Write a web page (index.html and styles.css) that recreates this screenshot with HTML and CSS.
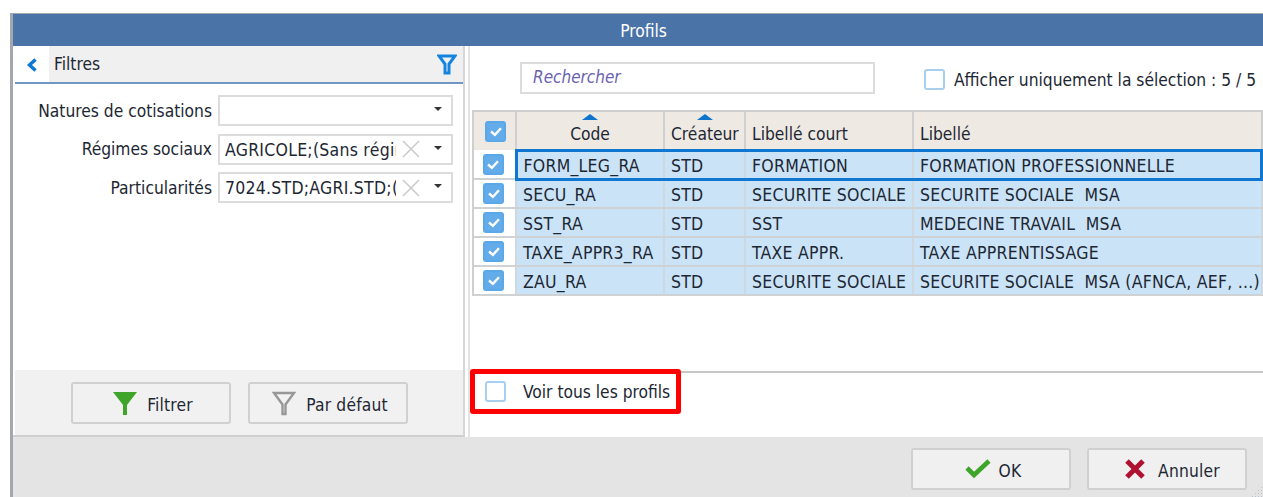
FILE: index.html
```html
<!DOCTYPE html>
<html lang="fr">
<head>
<meta charset="utf-8">
<title>Profils</title>
<link rel="stylesheet" href="styles.css">
</head>
<body>
<div class="window">
  <header class="titlebar">Profils</header>
  <div class="main">
    <aside class="filters">
      <div class="filters-head">
        <span class="collapse-tab">
          <svg width="12" height="14" viewBox="0 0 12 14"><path d="M9.5 1.5 L3.5 7 L9.5 12.5" fill="none" stroke="#0a78d7" stroke-width="3.4"/></svg>
        </span>
        <span class="filters-title">Filtres</span>
        <svg class="filters-icon" width="20" height="21" viewBox="0 0 20 21"><path d="M2 2 H18 L12 10 V19 H8 V10 Z" fill="none" stroke="#1584e0" stroke-width="3" stroke-linejoin="miter"/></svg>
      </div>
      <div class="filters-form">
        <div class="field">
          <label class="field-label">Natures de cotisations</label>
          <div class="combo"><span class="combo-text"></span><span class="combo-arrow"></span></div>
        </div>
        <div class="field">
          <label class="field-label">Régimes sociaux</label>
          <div class="combo">
            <span class="combo-text">AGRICOLE;(Sans régime)</span>
            <svg class="combo-clear" width="20" height="20" viewBox="0 0 20 20"><path d="M2 2 L18 18 M18 2 L2 18" stroke="#c9c9c9" stroke-width="1.5"/></svg>
            <span class="combo-arrow"></span>
          </div>
        </div>
        <div class="field">
          <label class="field-label">Particularités</label>
          <div class="combo">
            <span class="combo-text">7024.STD;AGRI.STD;(Sans)</span>
            <svg class="combo-clear" width="20" height="20" viewBox="0 0 20 20"><path d="M2 2 L18 18 M18 2 L2 18" stroke="#c9c9c9" stroke-width="1.5"/></svg>
            <span class="combo-arrow"></span>
          </div>
        </div>
      </div>
      <div class="filters-actions">
        <button class="btn btn-filter">
          <svg width="24" height="25" viewBox="0 0 24 25"><path d="M0 1 H24 L14 14 V24 H10 V14 Z" fill="#3fa52a"/></svg>
          <span>Filtrer</span>
        </button>
        <button class="btn btn-filter">
          <svg width="24" height="25" viewBox="0 0 24 25"><path d="M2 2 H22 L13.5 13.5 V23 H10.5 V13.5 Z" fill="none" stroke="#979797" stroke-width="2.4"/></svg>
          <span>Par défaut</span>
        </button>
      </div>
    </aside>
    <section class="profiles">
      <div class="toolbar">
        <div class="search">Rechercher</div>
        <label class="only-selection"><span class="check"></span><span>Afficher uniquement la sélection : 5 / 5</span></label>
      </div>
      <div class="grid-wrap">
        <table class="grid">
          <colgroup>
            <col class="col-check"><col class="col-code"><col class="col-creator"><col class="col-short"><col>
          </colgroup>
          <thead>
            <tr>
              <th class="cell-check"><span class="check checked head-check"><svg width="14" height="11" viewBox="0 0 12 10"><path d="M1.5 5 L5 8 L10.5 2" fill="none" stroke="#fff" stroke-width="2.2"/></svg></span></th>
              <th class="center sorted">Code</th>
              <th class="sorted">Créateur</th>
              <th>Libellé court</th>
              <th>Libellé</th>
            </tr>
          </thead>
          <tbody>
            <tr class="current">
              <td class="cell-check"><span class="check checked"><svg width="14" height="11" viewBox="0 0 12 10"><path d="M1.5 5 L5 8 L10.5 2" fill="none" stroke="#fff" stroke-width="2.2"/></svg></span></td>
              <td>FORM_LEG_RA</td><td>STD</td><td>FORMATION</td><td>FORMATION PROFESSIONNELLE</td>
            </tr>
            <tr>
              <td class="cell-check"><span class="check checked"><svg width="14" height="11" viewBox="0 0 12 10"><path d="M1.5 5 L5 8 L10.5 2" fill="none" stroke="#fff" stroke-width="2.2"/></svg></span></td>
              <td>SECU_RA</td><td>STD</td><td>SECURITE SOCIALE</td><td>SECURITE SOCIALE&nbsp; MSA</td>
            </tr>
            <tr>
              <td class="cell-check"><span class="check checked"><svg width="14" height="11" viewBox="0 0 12 10"><path d="M1.5 5 L5 8 L10.5 2" fill="none" stroke="#fff" stroke-width="2.2"/></svg></span></td>
              <td>SST_RA</td><td>STD</td><td>SST</td><td>MEDECINE TRAVAIL&nbsp; MSA</td>
            </tr>
            <tr>
              <td class="cell-check"><span class="check checked"><svg width="14" height="11" viewBox="0 0 12 10"><path d="M1.5 5 L5 8 L10.5 2" fill="none" stroke="#fff" stroke-width="2.2"/></svg></span></td>
              <td>TAXE_APPR3_RA</td><td>STD</td><td>TAXE APPR.</td><td>TAXE APPRENTISSAGE</td>
            </tr>
            <tr>
              <td class="cell-check"><span class="check checked"><svg width="14" height="11" viewBox="0 0 12 10"><path d="M1.5 5 L5 8 L10.5 2" fill="none" stroke="#fff" stroke-width="2.2"/></svg></span></td>
              <td>ZAU_RA</td><td>STD</td><td>SECURITE SOCIALE</td><td>SECURITE SOCIALE&nbsp; MSA (AFNCA, AEF, ...)</td>
            </tr>
          </tbody>
        </table>
      </div>
      <div class="all-profiles">
        <label class="all-label"><span class="check"></span><span>Voir tous les profils</span></label>
        <div class="highlight"></div>
      </div>
    </section>
  </div>
  <footer class="footer">
    <button class="btn btn-foot btn-ok">
      <svg width="28" height="22" viewBox="0 0 28 22"><path d="M3 10 L10 17 L25 3" fill="none" stroke="#3fa52a" stroke-width="4.6"/></svg>
      <span>OK</span>
    </button>
    <button class="btn btn-foot btn-cancel">
      <svg width="22" height="22" viewBox="0 0 22 22"><path d="M3 3 L19 19 M19 3 L3 19" fill="none" stroke="#ae1230" stroke-width="5"/></svg>
      <span>Annuler</span>
    </button>
    <svg class="grip" width="12" height="12" viewBox="0 0 12 12"><path d="M10 2h1v1h-1zM7 5h1v1H7zM10 5h1v1h-1zM4 8h1v1H4zM7 8h1v1H7zM10 8h1v1h-1zM1 11h1v1H1zM4 11h1v1H4zM7 11h1v1H7zM10 11h1v1h-1z" fill="#b9c3cf"/></svg>
  </footer>
</div>
</body>
</html>
```
FILE: styles.css
```css
* { box-sizing: border-box; }

html, body {
  margin: 0;
  height: 100%;
  overflow: hidden;
  background: #fff;
}

body {
  padding: 13px 0 0 10px;
  font-family: "DejaVu Sans Condensed", "DejaVu Sans", sans-serif;
  font-size: 17.25px;
  color: #1d2733;
}

.window {
  width: 1253px;
  height: 484px;
  display: flex;
  flex-direction: column;
  border-left: 3px solid #a3a8ae;
  border-top: 1px solid #a3a8ae;
}

.titlebar {
  height: 32px;
  flex: none;
  background: #4a74a8;
  color: #fff;
  text-align: center;
  line-height: 34px;
  padding-left: 11px;
}

.main {
  height: 391px;
  flex: none;
  display: flex;
}

/* Filter panel */
.filters {
  width: 452px;
  flex: none;
  display: flex;
  flex-direction: column;
  padding-left: 2px;
  border-right: 2px solid #d6d6d6;
  border-bottom: 2px solid #cfcfcf;
  margin-right: 5px;
  box-shadow: 3px 0 0 #fff, 5px 0 0 #e4e4e4;
}

.filters-head {
  height: 38px;
  flex: none;
  display: flex;
  align-items: center;
  background: #f0f0f0;
  border-bottom: 2px solid #6f97c2;
}

.collapse-tab {
  width: 34px;
  align-self: stretch;
  background: #fff;
  display: flex;
  align-items: center;
  justify-content: center;
  padding-top: 2px;
}

.filters-title {
  margin-left: 5px;
  flex: 1;
  padding-bottom: 1px;
}

.filters-icon { margin-right: 6px; }

.filters-form {
  flex: 1;
  display: flex;
  flex-direction: column;
  gap: 7.5px;
  padding: 11px 10px 0 0;
}

.field {
  display: flex;
  align-items: center;
  height: 31px;
  gap: 6px;
}

.field-label {
  width: 197px;
  text-align: right;
  white-space: nowrap;
}

.combo {
  width: 235px;
  height: 100%;
  display: flex;
  align-items: center;
  border: 2px solid #dcdcdc;
  padding: 0 9px 0 5px;
  background: #fff;
}

.combo-text {
  flex: 1;
  min-width: 0;
  font-size: 17.5px;
  letter-spacing: .25px;
  white-space: nowrap;
  overflow: hidden;
  padding-top: 1px;
}

.combo-clear { margin: 0 13px 0 5px; flex: none; }

.combo-arrow {
  flex: none;
  width: 0;
  height: 0;
  margin-bottom: 3px;
  border-left: 4px solid transparent;
  border-right: 4px solid transparent;
  border-top: 4px solid #333;
}

.filters-actions {
  height: 65px;
  flex: none;
  background: #f1f1f1;
  display: flex;
  gap: 17px;
  padding: 12px 0 0 56px;
}

.btn {
  height: 42px;
  display: flex;
  align-items: center;
  justify-content: center;
  gap: 10px;
  padding: 0 6px;
  font: inherit;
  color: inherit;
  border: 2px solid #d0d0d0;
  border-radius: 3px;
  background: #f1f1f1;
}

.btn span { padding-top: 3px; letter-spacing: .2px; }

.btn-filter { width: 160px; padding-left: 10px; }

/* Profile list */
.profiles {
  flex: 1;
  min-width: 0;
  display: flex;
  flex-direction: column;
  padding-left: 2px;
  background: #fff;
}

.toolbar {
  height: 64px;
  flex: none;
  display: flex;
  align-items: center;
  padding-left: 48px;
}

.search {
  width: 355px;
  height: 32px;
  border: 2px solid #dcdcdc;
  padding-left: 11px;
  line-height: 27px;
  font-size: 17px;
  font-style: italic;
  color: #6a63b0;
}

.only-selection {
  display: flex;
  align-items: center;
  gap: 9px;
  margin-left: 49px;
  white-space: nowrap;
  padding-top: 3px;
}

.check {
  width: 21px;
  height: 21px;
  flex: none;
  display: inline-flex;
  align-items: center;
  justify-content: center;
  border: 2px solid #a9cfee;
  border-radius: 3px;
  background: #fff;
}

.check.checked {
  border-color: #5aa8e8;
  background: #63ace9;
}

.grid-wrap {
  height: 263px;
  flex: none;
  border-bottom: 2px solid #c8c8c8;
  overflow: hidden;
}

.grid {
  width: 791px;
  table-layout: fixed;
  border-collapse: collapse;
  border-top: 2px solid #cfcfcf;
  border-left: 2px solid #cfcfcf;
}

.col-check { width: 43px; }
.col-code { width: 148px; }
.col-creator { width: 81px; }
.col-short { width: 168px; }

.grid th {
  height: 39px;
  padding: 8px 6px 0;
  font-weight: normal;
  text-align: left;
  background: #eee9e3;
  border-right: 2px solid #cfcfcf;
  white-space: nowrap;
  overflow: hidden;
}

.grid th.center { text-align: center; padding-left: 2px; padding-right: 2px; }

.grid th.sorted { position: relative; }

.grid th.sorted::before {
  content: "";
  position: absolute;
  top: 2px;
  left: 50%;
  margin-left: -8px;
  border-left: 8px solid transparent;
  border-right: 8px solid transparent;
  border-bottom: 6px solid #0f75cc;
}

.grid td {
  height: 29px;
  padding: 2px 6px 0;
  font-size: 17.5px;
  letter-spacing: .25px;
  background: #cbe3f7;
  border-right: 2px solid #cfd8df;
  border-bottom: 2px solid #cfd2d4;
  white-space: nowrap;
}

.grid .cell-check {
  padding: 0;
  text-align: center;
  vertical-align: middle;
}

.grid td.cell-check {
  background: #fff;
  padding-right: 2px;
}

.grid th.cell-check { padding: 0 0 0 2px; }

.grid .check { vertical-align: middle; }

.grid tr.current td:not(.cell-check) {
  border-top: 3px solid #0f76d2;
  border-bottom: 3px solid #0f76d2;
}

.grid tr.current td:nth-child(2) { border-left: 3px solid #0f76d2; }
.grid tr.current td:last-child { border-right: 3px solid #0f76d2; }

.all-profiles {
  flex: 1;
  position: relative;
  padding: 8px 0 0 13px;
}

.all-label {
  display: flex;
  align-items: center;
  gap: 17px;
  white-space: nowrap;
}

/* Red callout drawn over the checkbox row */
.highlight {
  position: absolute;
  left: -2px;
  top: -4px;
  width: 211px;
  height: 45px;
  border: 5px solid #f00;
  border-radius: 3px;
  pointer-events: none;
}

.footer {
  flex: 1;
  position: relative;
  background: #e4e4e4;
  display: flex;
  justify-content: flex-end;
  gap: 16px;
  padding: 11px 16px 0 0;
}

.btn-foot {
  width: 160px;
  background: #f0f0f0;
  gap: 12px;
}

.btn-ok { gap: 7px; padding-left: 9px; }

.btn-cancel { padding-left: 16px; }

.grip {
  position: absolute;
  right: 0;
  bottom: 0;
}
```
